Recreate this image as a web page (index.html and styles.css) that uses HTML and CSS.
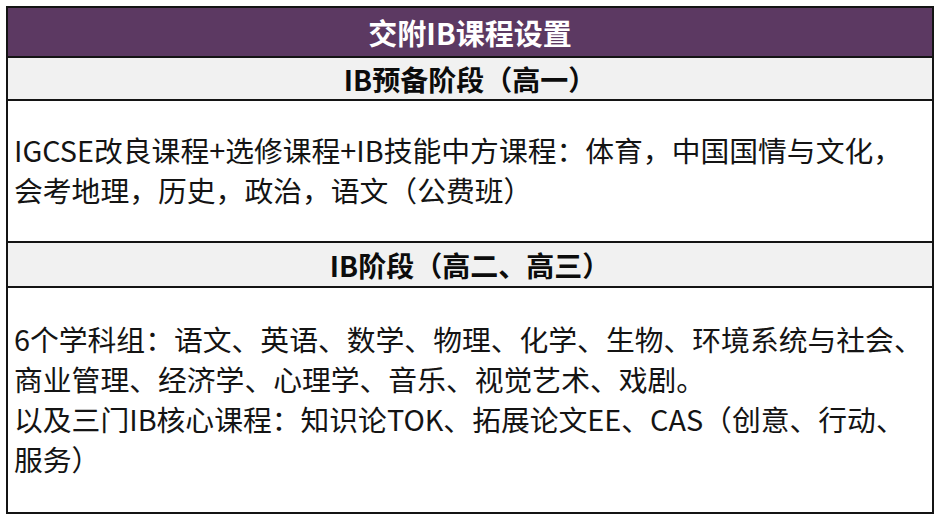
FILE: index.html
```html
<!DOCTYPE html>
<html lang="zh-CN">
<head>
<meta charset="utf-8">
<title>交附IB课程设置</title>
<link rel="stylesheet" href="styles.css">
</head>
<body>
<div class="table">
  <div class="row title">交附IB课程设置</div>
  <div class="row stage stage-1">IB预备阶段（高一）</div>
  <div class="row body body-1">
    <p class="lines">IGCSE改良课程+选修课程+IB技能中方课程：体育，中国国情与文化，<br>会考地理，历史，政治，语文（公费班）</p>
  </div>
  <div class="row stage stage-2">IB阶段（高二、高三）</div>
  <div class="row body body-2">
    <p class="lines">6个学科组：语文、英语、数学、物理、化学、生物、环境系统与社会、<br>商业管理、经济学、心理学、音乐、视觉艺术、戏剧。<br>以及三门IB核心课程：知识论TOK、拓展论文EE、CAS（创意、行动、<br>服务）</p>
  </div>
</div>
</body>
</html>
```
FILE: styles.css
```css
html, body {
  margin: 0;
  padding: 0;
  background: #ffffff;
}
body {
  padding: 6px;
  font-family: "Noto Sans CJK SC", "Noto Sans", sans-serif;
  color: #111111;
}
.table {
  width: 928px;
  height: 508px;
  box-sizing: border-box;
  border: 2px solid #141414;
  display: flex;
  flex-direction: column;
}
.row {
  box-sizing: border-box;
  border-bottom: 2px solid #141414;
  display: flex;
  align-items: center;
}
.row:last-child {
  border-bottom: none;
}
.title {
  height: 50px;
  background: #5c3962;
  color: #ffffff;
  font-weight: 700;
  font-size: 29px;
  justify-content: center;
}
.stage {
  background: #f1f1f1;
  font-weight: 700;
  font-size: 28px;
  justify-content: center;
  color: #0c0c0c;
}
.stage-1 { height: 43px; }
.stage-2 { height: 45px; }
.body {
  background: #ffffff;
  padding-left: 6px;
}
.body-1 { height: 142px; }
.body-2 { flex: 1; }
.lines {
  margin: 0 0 2px;
  font-size: 28.8px;
  line-height: 40px;
  white-space: nowrap;
  color: #141414;
}
```
